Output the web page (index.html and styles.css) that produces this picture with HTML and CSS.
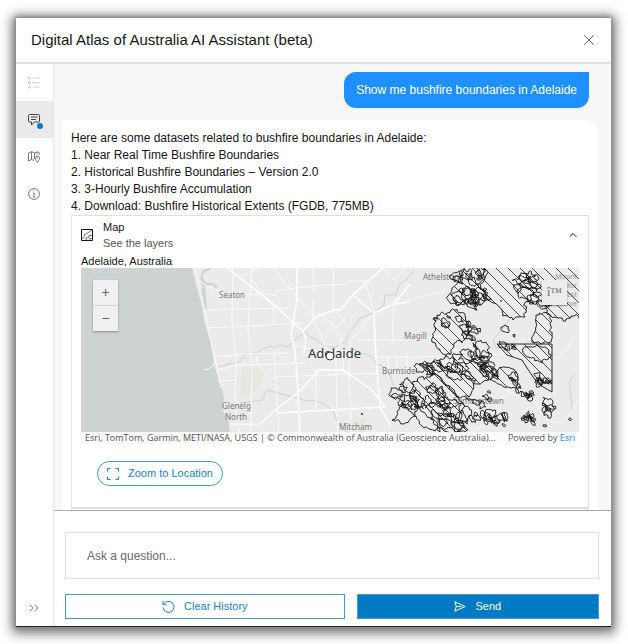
FILE: index.html
```html
<!DOCTYPE html>
<html lang="en">
<head>
<meta charset="utf-8">
<meta name="viewport" content="width=device-width, initial-scale=1">
<title>Digital Atlas of Australia AI Assistant (beta)</title>
<link rel="stylesheet" href="styles.css">
</head>
<body>
<div class="window">
  <header class="header">
    <h1 class="title">Digital Atlas of Australia AI Assistant (beta)</h1>
    <button class="close" type="button" aria-label="Close">
      <svg width="10" height="10" viewBox="0 0 10 10"><path d="M.5.5l9 9M9.500.5l-9 9"/></svg>
    </button>
  </header>
  <div class="body">
    <nav class="rail" aria-label="Panels">
      <button class="rail-button faint" type="button" aria-label="List">
        <svg width="12" height="13" viewBox="0 0 12 13"><path d="M4.500 2H12M4.500 6.500H12M4.500 11H12M.5 1h2v2h-2zM.5 5.500h2v2h-2zM.5 10h2v2h-2z"/></svg>
      </button>
      <button class="rail-button active" type="button" aria-label="Chat">
        <svg width="12" height="12" viewBox="0 0 12 12"><path d="M1.500.5h9q1 0 1 1v5.500q0 1-1 1H6.500L3.500 11V8h-2q-1 0-1-1V1.500q0-1 1-1zM3 3h6.500M3 5.500h5"/></svg>
        <span class="dot"></span>
      </button>
      <button class="rail-button" type="button" aria-label="Map places">
        <svg width="12" height="12" viewBox="0 0 12 12"><path d="M6 9.500L3.500 8.500.5 10V2L3.500.7 6.500 2 9.300.7 11.500 2v1.500M3.500.7v7.800M6.500 2v6M9 .7v3M9.500 11.500C8.500 10 7.500 8.700 7.500 7.200a2 2 0 0 1 4 0c0 1.500-1 2.800-2 4.300zM9 7h1"/></svg>
      </button>
      <button class="rail-button" type="button" aria-label="Information">
        <svg width="12" height="12" viewBox="0 0 12 12"><circle cx="6" cy="6" r="5.400"/><path d="M5 5h1v4M4.700 9h2.600M5.500 3h1"/></svg>
      </button>
      <button class="rail-button expand" type="button" aria-label="Expand">
        <svg width="10" height="8" viewBox="0 0 10 8"><path d="M.8.7L4.200 4 .8 7.300M5.500.7L9 4 5.500 7.300"/></svg>
      </button>
    </nav>
    <main class="main">
      <section class="messages">
        <p class="question">Show me bushfire boundaries in Adelaide</p>
        <article class="answer">
          <p>Here are some datasets related to bushfire boundaries in Adelaide:</p>
          <ol class="datasets">
            <li>Near Real Time Bushfire Boundaries</li>
            <li>Historical Bushfire Boundaries – Version 2.0</li>
            <li>3-Hourly Bushfire Accumulation</li>
            <li>Download: Bushfire Historical Extents (FGDB, 775MB)</li>
          </ol>
          <section class="block">
            <button class="block-header" type="button">
              <svg width="12" height="12" viewBox="0 0 12 12"><path d="M.5.5h11v11H.5z"/><path class="thin" d="M1 9.500L3 8.500 3.500 5.500 6 4.500 8 3l3-2M5 11V9l2.500-.5L8 6.500h3M8.500 11l.5-1.500h2"/></svg>
              <span class="block-text"><span>Map</span><span class="subtitle">See the layers</span></span>
              <svg class="chevron" width="8" height="6" viewBox="0 0 8 6"><path d="M.7 4.800L4 1.500l3.300 3.300"/></svg>
            </button>
            <p class="place">Adelaide, Australia</p>
            <div class="map">
              <svg class="canvas" viewBox="81 268 498 176" preserveAspectRatio="xMidYMid slice" role="img" aria-label="Map of Adelaide">
                <rect class="land" x="81" y="268" width="498" height="176"/>
                <path class="park" d="M242 366l23 1-5 20-20 15zM345 432q5-15 20-13v25h-20z"/>
                <path class="sea" d="M81 268h111l3 13 6 22 4 21 5 16 5 28 6 17 3 12-1 14 6 12 1 21H81z"/>
                <path class="inlet" d="M210 269q-10 2-8 9t9 6q7 1 4 5M201 278l3 9 2 22M205 309l-3-20"/>
                <path class="creek" d="M240 359q5-1 6-6 9 2 17-4l7-3q5 3 9-1l10 2 5-7 12-8q7 9 10 7 8 10 19 8l10-5q4-11 10-16l5-8 14-5 10-8 1-10 11 0 3-10 8-6 8-9M240 403l22-3 5-10 19 5q12 3 20 6 13-3 27 10l5 13 9 8M350 347l10 6q13 1 16 11 13 1 17 21M218 367l24-6"/>
                <path class="road" d="M195 268l9 38 4 23 7 29 6 30M201 281q5 6 11 7l12 6h16l37 1M204 311l15-2h20l51-1M208 328l40-2 55-3M213 357l25-3 50-1M217 370l23-5 65-2M218 381l18-1M233 268l-1 52 4 38-1 38 4 36M252 268l-4 60 4 42-1 62M240 278l32-18M252 280l21 27 1 18M273 268l20 25 22 24M313 268l1 25M333 268l1 43M275 291l38-5 35-2M313 300v20l20 40M350 281h19l14-13M365 281l9 32M374 313l-24 29-1 52M361 325l9-8M294 345l16 4 15 5M330 320l12 20-6 13 0 22 2 57M300 430v-10M274 354l5 78M240 365l65-2M276 377l101-4M356 340h40l50-4M377 357h37l32-1M313 370h30v-20M316 370v40M350 392l1 46M240 354l-11 3-9-1M270 378q-16-13-13-22M216 357q-2 13-12 13M231 424h23M230 425l30-1M388 357v16M397 355v18M407 353v18M394 304l-2 40M407 300l39-9M383 268l12 12 10-12M390 432l-4 12M450 348l15 5 5-8 10 12 22-3 23-16M540 360l20-3 15-20M460 440l23-15 30-40M500 400q20-20 40 10t38-10"/>
                <path class="highway" d="M227 268l13 10 32 25 31 28M297 268v32l-6 35 4 15 3 43 2 51M383 268l-30 27 21 18 2 44 4 50 10 18M353 295l-13 15h-6l-18 7-13 14 3 9-2 13M374 313l20-9 16-2M394 304l16-20M260 424l12-11 29-23 18-20h24l29 20 13 17-108 6"/>
                <path class="road" d="M324 318l12 10 9-8-11-10"/>
                <path class="creek" d="M575 375q-7 4-5 13l2 22M497 350l-4-10 7-8 10-13"/>
                <g class="labels">
                  <text x="219" y="298">Seaton</text>
                  <text x="222" y="409">Glenelg</text>
                  <text x="225" y="420">North</text>
                  <text x="423" y="280">Athelstone</text>
                  <text x="404" y="339">Magill</text>
                  <text x="382" y="374">Burnside</text>
                  <text x="339" y="430">Mitcham</text>
                  <text x="453" y="404">Summertown</text>
                </g>
                <g class="reserve">
                  <text x="577" y="279">Mount</text>
                  <text x="577" y="288">Mor</text>
                  <text x="577" y="297">rest</text>
                  <text x="577" y="306">Reserve</text>
                </g>
                <text class="city" x="308" y="358">Adelaide</text>
                <circle class="pin" cx="330" cy="356" r="4"/>
                <defs id="clips"></defs>
                <g class="burns" id="burns"></g>
              </svg>
              <div class="zoom">
                <button type="button" aria-label="Zoom in">+</button>
                <button type="button" aria-label="Zoom out">−</button>
              </div>
              <button class="tool" type="button">î™</button>
              <div class="attribution"><span class="sources">Esri, TomTom, Garmin, METI/NASA, USGS | © Commonwealth of Australia (Geoscience Australia)…</span><span>Powered by <a href="#esri">Esri</a></span></div>
            </div>
            <button class="locate" type="button">
              <svg width="12" height="12" viewBox="0 0 12 12"><path d="M.5 3.500v-3h3M8.500.5h3v3M11.500 8.500v3h-3M3.500 11.500h-3v-3"/></svg>
              Zoom to Location
            </button>
          </section>
          <div class="next"></div>
        </article>
      </section>
      <form class="composer">
        <input class="prompt" type="text" placeholder="Ask a question..." aria-label="Ask a question">
        <div class="actions">
          <button class="action" type="button">
            <svg width="13" height="13" viewBox="0 0 13 13"><path d="M1.500 4.500A5.500 5.500 0 1 1 1 7.500M1 1.200v3.500h3.500"/></svg>
            Clear History
          </button>
          <button class="action primary" type="button">
            <svg width="12" height="11" viewBox="0 0 12 11"><path d="M.8.800L11.200 5.500.8 10.200l1.500-4.700zM2.300 5.500h5"/></svg>
            Send
          </button>
        </div>
      </form>
    </main>
  </div>
</div>
<script src="map.js"></script>
</body>
</html>
```
FILE: styles.css
```css
* { box-sizing: border-box; }

body {
  margin: 0;
  height: 100vh;
  padding: 18px 17px 17px 16px;
  background: #fff;
  color: #151515;
  font: 12px/17px "Liberation Sans", Arial, sans-serif;
}

p, h1, ol { margin: 0; }
ol { padding: 0; }
button, input { font: inherit; color: inherit; }
button { padding: 0; border: 0; background: none; }
svg { display: block; fill: none; stroke: currentColor; flex: none; }

.window {
  height: 100%;
  display: flex;
  flex-direction: column;
  background: #fff;
  border-bottom: 1px solid #222;
  box-shadow: 0 0 4px 1px #888, 0 2px 11px 4px rgba(0, 0, 0, .55);
}

.header {
  flex: none;
  height: 46px;
  display: flex;
  align-items: center;
  justify-content: space-between;
  padding: 0 17px 0 15px;
  border-bottom: 2px solid #e0e0e0;
}
.title { font-size: 15px; line-height: 20px; font-weight: 400; }
.close { color: #6a6a6a; }

.body { flex: 1; min-height: 0; display: flex; }

.rail {
  flex: none;
  width: 38px;
  display: flex;
  flex-direction: column;
  border-right: 1px solid #e8e8e8;
  color: #6a6a6a;
}
.rail-button {
  position: relative;
  height: 37px;
  display: flex;
  align-items: center;
  justify-content: center;
  padding-right: 1px;
}
.rail-button svg { stroke-width: .9; }
.faint { color: #cfcfcf; }
.active { background: #eaeaea; color: #333; }
.dot {
  position: absolute;
  right: 10px;
  bottom: 9px;
  width: 6px;
  height: 6px;
  border-radius: 50%;
  background: #007ac2;
}
.expand { margin-top: auto; }

.main { flex: 1; min-width: 0; display: flex; flex-direction: column; }
.messages {
  flex: 1;
  min-height: 0;
  overflow: hidden;
  display: flex;
  flex-direction: column;
  gap: 12px;
  padding: 8px 13px 0 8px;
  background: #f7f7f7;
}
.question {
  flex: none;
  align-self: flex-end;
  margin-right: 9px;
  padding: 9px 12px;
  border-radius: 12px 0 12px 12px;
  background: #1e90ff;
  color: #fff;
  line-height: 18px;
}
.answer {
  flex: 1 0 auto;
  padding: 10px 9px 0;
  border-radius: 0 12px 0 0;
  background: #fff;
}
.datasets { list-style-position: inside; }

.block { border: 1px solid #dfdfdf; padding: 0 9px 21px; }
.block-header {
  width: 100%;
  display: flex;
  align-items: center;
  gap: 10px;
  padding: 3px 2px 3px 0;
  text-align: left;
  font-size: 11px;
  line-height: 16px;
}
.thin { stroke-width: .6; }
.block-text { flex: 1; display: flex; flex-direction: column; }
.subtitle { color: #555; }
.place { font-size: 11px; line-height: 14px; }

.map { position: relative; overflow: hidden; }
.canvas { width: 100%; height: 176px; }
.canvas text { stroke: none; font-family: "Noto Sans", sans-serif; }
.land { fill: #ebebeb; stroke: none; }
.park { fill: #e7e8e2; stroke: none; }
.sea { fill: #cdd2d3; stroke: none; }
.inlet { stroke: #cdd2d3; stroke-width: 2; }
.creek { stroke: #cfd1d1; }
.road { stroke: #fafafa; }
.highway { stroke: #fff; stroke-width: 1.500; }
.labels { fill: #777; font-size: 8px; }
.reserve { fill: #929a8d; font-size: 7px; text-anchor: end; }
.city { fill: #333; font-size: 13px; }
.pin { fill: #fff; stroke: #333; }
.burns { stroke: #111; stroke-width: .9; stroke-linejoin: round; }
.hatch { stroke: #222; stroke-width: .8; }

.zoom {
  position: absolute;
  top: 12px;
  left: 12px;
  display: flex;
  flex-direction: column;
  gap: 1px;
  background: #d5d5d5;
  box-shadow: 0 1px 2px rgba(0, 0, 0, .35);
}
.zoom button {
  width: 25px;
  height: 25px;
  background: #f0f0f0;
  color: #666;
  font-size: 14px;
  line-height: 25px;
}
.tool {
  position: absolute;
  top: 12px;
  right: 12px;
  width: 25px;
  height: 25px;
  background: #ececec;
  color: #6a6a6a;
  font-family: "Liberation Serif", serif;
  box-shadow: 0 1px 2px rgba(0, 0, 0, .35);
}
.attribution {
  position: absolute;
  left: 0;
  right: 0;
  bottom: 0;
  display: flex;
  justify-content: space-between;
  padding: 0 4px;
  background: rgba(255, 255, 255, .85);
  color: #555;
  font: 9px/12px "Open Sans", sans-serif;
  white-space: nowrap;
}
.attribution a { color: #1a8fe8; text-decoration: none; }

.locate {
  display: flex;
  align-items: center;
  gap: 9px;
  height: 25px;
  margin: 17px 0 0 16px;
  padding: 0 9px;
  border: 1px solid #4796d4;
  border-radius: 13px;
  color: #1a7fc8;
  font-size: 11px;
}
.next { height: 20px; border: 1px solid #dfdfdf; }

.composer {
  flex: none;
  display: flex;
  flex-direction: column;
  gap: 15px;
  padding: 21px 12px 7px 11px;
  border-top: 1px solid #aaa;
}
.prompt {
  width: 100%;
  height: 47px;
  padding: 0 21px;
  border: 1px solid #dfdfdf;
  border-radius: 0;
  background: #fff;
}
.prompt::placeholder { color: #6a6a6a; opacity: 1; }
.actions { display: grid; grid-template-columns: 15fr 13fr; gap: 12px; }
.action {
  height: 25px;
  display: flex;
  align-items: center;
  justify-content: center;
  gap: 9px;
  border: 1px solid #4796d4;
  color: #1a7fc8;
  font-size: 11px;
}
.primary { background: #007ac2; color: #fff; }
```
FILE: map.js
```js
// Draws the burnt areas: each outline is a polygon whose edges are roughened.
const SVG = "http://www.w3.org/2000/svg";
const burns = document.getElementById("burns");
const clips = document.getElementById("clips");
let seed = 17;
let hatches = 0;
function random() {
  seed = (seed * 16807) % 2147483647;
  return seed / 2147483647;
}

function addPath(parent, d) {
  const path = document.createElementNS(SVG, "path");
  path.setAttribute("d", d);
  parent.append(path);
  return path;
}

function outline(points, wobble, hatched) {
  let line = points.concat([points[0]]);
  for (let pass = 0; pass < 3; pass++) {
    const next = [line[0]];
    for (let i = 1; i < line.length; i++) {
      const [ax, ay] = line[i - 1];
      const [bx, by] = line[i];
      const length = Math.hypot(bx - ax, by - ay);
      if (length > 3) {
        const reach = Math.min(wobble, length * 0.8);
        next.push([(ax + bx) / 2 + (random() - 0.5) * reach, (ay + by) / 2 + (random() - 0.5) * reach]);
      }
      next.push([bx, by]);
    }
    line = next;
  }
  const d = "M" + line.map(p => p.map(n => n.toFixed(1)).join(" ")).join("L") + "Z";
  addPath(burns, d);
  if (hatched) {
    const clip = document.createElementNS(SVG, "clipPath");
    clip.id = "clip" + ++hatches;
    addPath(clip, d);
    clips.append(clip);
    let lines = "";
    for (let x = 200; x < 600; x += 12) lines += `M${x} 260l190 190`;
    const hatch = addPath(burns, lines);
    hatch.setAttribute("class", "hatch");
    hatch.setAttribute("clip-path", `url(#${clip.id})`);
  }
}

// A small patch, stretched along the south-east slope of the ranges.
function patch(cx, cy, size) {
  const count = 5 + Math.floor(random() * 4);
  const stretch = 0.35 + random() * 0.6;
  const turn = 0.6 + (random() - 0.5) * 1.2;
  const points = [];
  for (let i = 0; i < count; i++) {
    const angle = (i / count) * Math.PI * 2;
    const scale = size * (0.4 + random() * 0.8);
    const x = Math.cos(angle) * scale;
    const y = Math.sin(angle) * scale * stretch;
    points.push([cx + x * Math.cos(turn) - y * Math.sin(turn), cy + x * Math.sin(turn) + y * Math.cos(turn)]);
  }
  outline(points, 4, false);
}

// Large hatched areas.
outline([[464, 270], [480, 264], [488, 272], [484, 290], [477, 303], [467, 299], [454, 303], [447, 297], [452, 288], [463, 284]], 6, true);
outline([[482, 264], [583, 264], [583, 319], [574, 316], [566, 319], [555, 317], [543, 309], [530, 300], [525, 306], [525, 317], [513, 320], [502, 310], [490, 301], [479, 288]], 6, true);
outline([[437, 315], [451, 310], [464, 313], [472, 330], [462, 343], [454, 346], [446, 356], [440, 351], [432, 342], [434, 325]], 5, true);
outline([[536, 315], [548, 313], [551, 322], [551, 342], [532, 342]], 4, true);
outline([[500, 367], [513, 369], [518, 376], [516, 388], [504, 387], [490, 380]], 2, true);
outline([[412, 384], [420, 377], [433, 374], [448, 386], [462, 402], [458, 418], [468, 430], [444, 431], [428, 409], [412, 398]], 6, true);
outline([[419, 364], [434, 361], [446, 366], [461, 374], [476, 379], [470, 396], [456, 396], [444, 384], [430, 372]], 5, true);
outline([[452, 356], [462, 354], [478, 363], [494, 364], [498, 376], [480, 384], [464, 374], [452, 370]], 4, true);
outline([[392, 420], [402, 402], [414, 404], [432, 418], [440, 432], [424, 428], [414, 416], [404, 424]], 5, false);

// The straight-sided block and the valley inside it.
outline([[497, 344], [552, 344], [552, 392], [538, 384], [527, 368], [522, 360], [507, 355]], 0, true);
outline([[523, 349], [536, 346], [549, 351], [551, 357], [540, 362], [528, 357]], 4, false);

// Scattered clusters: [centre x, centre y, half width, half height, count, largest size].
[
  [470, 276, 15, 9, 9, 8],
  [463, 297, 15, 9, 11, 9],
  [481, 295, 8, 10, 5, 7],
  [473, 330, 10, 8, 8, 7],
  [447, 322, 13, 6, 5, 7],
  [434, 369, 18, 5, 6, 8],
  [467, 366, 20, 11, 8, 11],
  [404, 398, 11, 12, 7, 9],
  [428, 400, 22, 12, 14, 13],
  [450, 413, 15, 16, 13, 11],
  [478, 410, 14, 18, 13, 6],
  [483, 357, 9, 9, 6, 8],
  [490, 376, 11, 10, 6, 9],
  [525, 285, 12, 11, 8, 9],
  [538, 300, 10, 7, 5, 7],
  [541, 382, 8, 6, 7, 5],
  [515, 385, 5, 8, 5, 5],
  [497, 416, 9, 8, 6, 7],
  [529, 418, 6, 5, 9, 3],
  [548, 408, 6, 6, 4, 8],
  [508, 347, 8, 2, 4, 3],
  [525, 396, 10, 7, 8, 3]
].forEach(([cx, cy, w, h, count, size]) => {
  for (let i = 0; i < count; i++) {
    const angle = random() * Math.PI * 2;
    const reach = Math.sqrt(random());
    patch(cx + Math.cos(angle) * w * reach, cy + Math.sin(angle) * h * reach, 2 + random() * size);
  }
});

// Isolated spots.
[[362, 414, 1], [506, 329, 4], [514, 336, 2], [570, 419, 2], [545, 426, 3],
 [504, 425, 2], [489, 392, 2], [501, 301, 1]].forEach(([x, y, size]) => patch(x, y, size));
```
